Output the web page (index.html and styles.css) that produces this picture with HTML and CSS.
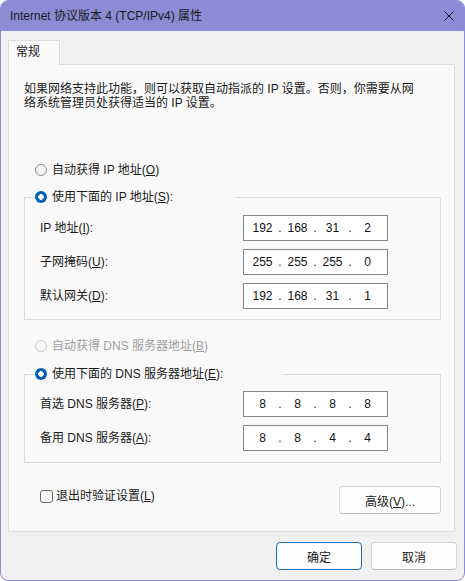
FILE: index.html
```html
<!DOCTYPE html>
<html lang="zh-CN">
<head>
<meta charset="utf-8">
<title>Internet 协议版本 4 (TCP/IPv4) 属性</title>
<link rel="stylesheet" href="styles.css">
</head>
<body>
<div class="window">
  <div class="titlebar">
    <span class="title">Internet 协议版本 4 (TCP/IPv4) 属性</span>
    <span class="close"><svg width="10" height="10" viewBox="0 0 10 10"><path d="M0.5 0.5L9.5 9.5M9.5 0.5L0.5 9.5" stroke="#1b1b1b" stroke-width="1" fill="none"/></svg></span>
  </div>
  <div class="body">
    <div class="tabs"><div class="tab">常规</div></div>
    <div class="panel">
      <p class="desc">如果网络支持此功能，则可以获取自动指派的 IP 设置。否则，你需要从网<br>络系统管理员处获得适当的 IP 设置。</p>

      <div class="radio-row first"><span class="radio"></span><span>自动获得 IP 地址(<u>O</u>)</span></div>

      <fieldset class="group group-ip">
        <legend class="legend legend-ip"><span class="radio checked"></span><span>使用下面的 IP 地址(<u>S</u>):</span></legend>
        <div class="fields">
          <div class="field-row"><span class="label">IP 地址(<u>I</u>):</span>
            <div class="ipbox"><span class="oct">192</span><span class="dot">.</span><span class="oct">168</span><span class="dot">.</span><span class="oct">31</span><span class="dot">.</span><span class="oct">2</span></div></div>
          <div class="field-row"><span class="label">子网掩码(<u>U</u>):</span>
            <div class="ipbox"><span class="oct">255</span><span class="dot">.</span><span class="oct">255</span><span class="dot">.</span><span class="oct">255</span><span class="dot">.</span><span class="oct">0</span></div></div>
          <div class="field-row"><span class="label">默认网关(<u>D</u>):</span>
            <div class="ipbox"><span class="oct">192</span><span class="dot">.</span><span class="oct">168</span><span class="dot">.</span><span class="oct">31</span><span class="dot">.</span><span class="oct">1</span></div></div>
        </div>
      </fieldset>

      <div class="radio-row disabled"><span class="radio"></span><span>自动获得 DNS 服务器地址(<u>B</u>)</span></div>

      <fieldset class="group group-dns">
        <legend class="legend legend-dns"><span class="radio checked"></span><span>使用下面的 DNS 服务器地址(<u>E</u>):</span></legend>
        <div class="fields">
          <div class="field-row"><span class="label">首选 DNS 服务器(<u>P</u>):</span>
            <div class="ipbox"><span class="oct">8</span><span class="dot">.</span><span class="oct">8</span><span class="dot">.</span><span class="oct">8</span><span class="dot">.</span><span class="oct">8</span></div></div>
          <div class="field-row"><span class="label">备用 DNS 服务器(<u>A</u>):</span>
            <div class="ipbox"><span class="oct">8</span><span class="dot">.</span><span class="oct">8</span><span class="dot">.</span><span class="oct">4</span><span class="dot">.</span><span class="oct">4</span></div></div>
        </div>
      </fieldset>

      <div class="bottom-row">
        <label class="check-row"><span class="checkbox"></span><span>退出时验证设置(<u>L</u>)</span></label>
        <button class="btn btn-adv">高级(<u>V</u>)...</button>
      </div>
    </div>
    <div class="actions">
      <button class="btn btn-primary">确定</button>
      <button class="btn">取消</button>
    </div>
  </div>
</div>
</body>
</html>
```
FILE: styles.css
```css
* { box-sizing: border-box; }
html, body { margin: 0; padding: 0; }
body {
  width: 465px;
  height: 581px;
  background: #ffffff;
  font-family: "Liberation Sans", "Noto Sans CJK SC", sans-serif;
  font-size: 12px;
  color: #1a1a1a;
}
u { text-decoration: underline; text-underline-offset: 1px; }

.window {
  width: 465px;
  height: 581px;
  border: 1px solid #8d8ad6;
  border-radius: 8px;
  background: #f0f0f0;
  display: flex;
  flex-direction: column;
  overflow: hidden;
}
.titlebar {
  flex: none;
  height: 30px;
  background: #8d8ad6;
  display: flex;
  align-items: center;
  justify-content: space-between;
  padding: 0 10px 0 9px;
}
.title { line-height: 16px; }
.close { display: flex; width: 10px; height: 10px; margin-top: -1px; }

.body {
  flex: 1;
  display: flex;
  flex-direction: column;
  padding: 9px 7px 10px 7px;
}
.tabs { display: flex; }
.tab {
  position: relative;
  z-index: 1;
  width: 52px;
  height: 25px;
  margin-bottom: -1px;
  padding: 0 0 0 7px;
  line-height: 22px;
  background: #f9f9f9;
  border: 1px solid #dcdcdc;
  border-bottom: none;
}
.panel {
  margin-right: 2px;
  background: #f9f9f9;
  border: 1px solid #dcdcdc;
  padding: 17px 13px 17px 15px;
  display: flex;
  flex-direction: column;
}
.desc { margin: 0; line-height: 14px; }

.radio-row {
  display: flex;
  align-items: center;
  height: 16px;
  line-height: 16px;
  padding-left: 11px;
}
.radio-row.first { margin-top: 52px; }
.radio-row.disabled { margin-top: 18px; color: #a0a0a0; }

.radio {
  flex: none;
  width: 12px;
  height: 12px;
  border-radius: 50%;
  border: 1px solid #8a8a8a;
  background: #f3f3f3;
  margin-right: 5px;
}
.radio-row.disabled .radio { border-color: #c8c8c8; background: #f9f9f9; }
.radio.checked {
  border: none;
  background: radial-gradient(circle, #ffffff 0 2.6px, #005fb8 3px);
}

.group {
  margin: 0;
  padding: 0 0 10px 0;
  border: 1px solid #dcdcdc;
  min-width: 0;
}
.group-ip { margin-top: 11px; }
.group-dns { margin-top: 12px; padding-bottom: 11px; }
.legend {
  display: flex;
  align-items: center;
  height: 16px;
  line-height: 16px;
  padding: 0;
  margin-left: 10px;
}
.legend-ip { width: 200px; }
.legend-dns { width: 248px; }

.fields {
  display: flex;
  flex-direction: column;
  gap: 8px;
  padding: 10px 52px 0 15px;
}
.group-dns .fields { padding-top: 9px; }
.field-row {
  display: flex;
  align-items: center;
  justify-content: space-between;
  height: 26px;
}
.label { line-height: 16px; }
.ipbox {
  flex: none;
  width: 145px;
  height: 26px;
  border: 1px solid #868686;
  background: #ffffff;
  display: flex;
  align-items: center;
  padding-left: 4px;
  color: #111;
}
.oct { width: 29px; text-align: center; }
.dot { width: 6px; text-align: center; }

.bottom-row {
  margin-top: 23px;
  display: flex;
  justify-content: space-between;
  align-items: flex-start;
}
.check-row {
  display: flex;
  align-items: center;
  height: 16px;
  line-height: 16px;
  margin-top: 2px;
  padding-left: 16px;
}
.checkbox {
  flex: none;
  width: 13px;
  height: 13px;
  border: 1px solid #6a6a6a;
  border-radius: 3px;
  background: #f6f6f6;
  margin-right: 3px;
}

.btn {
  font-family: inherit;
  font-size: 12px;
  color: #1a1a1a;
  height: 28px;
  width: 86px;
  padding: 0;
  background: #fdfdfd;
  border: 1px solid #d3d3d3;
  border-bottom-color: #bdbdbd;
  border-radius: 4px;
}
.btn-adv { width: 102px; }
.btn-primary { border-color: #1a6fc4; }

.actions {
  margin-top: 10px;
  display: flex;
  justify-content: flex-end;
  gap: 9px;
}
```
